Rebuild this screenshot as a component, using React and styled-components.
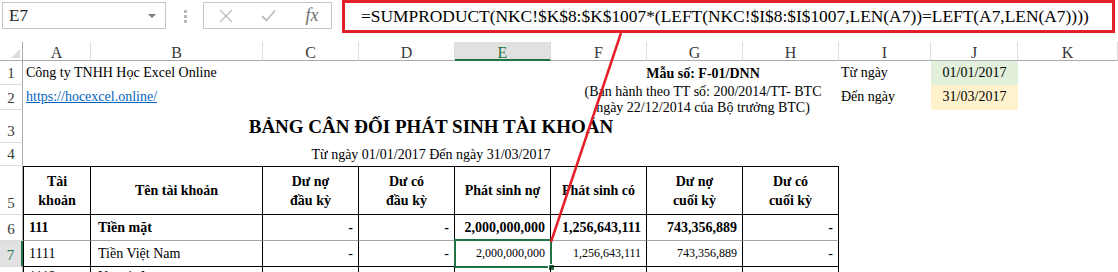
import React from "react";
import styled, { createGlobalStyle, css } from "styled-components";

const GlobalStyle = createGlobalStyle`
  html, body {
    margin: 0;
    padding: 0;
    background: #fff;
  }
  body {
    font-family: "Liberation Serif", "Times New Roman", serif;
    color: #000;
  }
`;

const Page = styled.div`
  position: relative;
  width: 1118px;
  height: 272px;
  overflow: hidden;
  background: #fff;
`;

/* ---------- formula bar ---------- */

const TopBar = styled.div`
  display: flex;
  align-items: flex-start;
  height: 33px;
  padding-left: 2px;
`;

const NameBox = styled.div`
  margin-top: 2px;
  width: 164px;
  height: 27px;
  box-sizing: border-box;
  border: 1px solid #c6c6c6;
  display: flex;
  align-items: center;
  justify-content: space-between;
  padding: 0 9px 0 6px;
  font-size: 17px;
  color: #222;
`;

const Caret = styled.span`
  width: 0;
  height: 0;
  border-left: 4px solid transparent;
  border-right: 4px solid transparent;
  border-top: 4px solid #7a7a7a;
`;

const Grip = styled.div`
  margin: 10px 0 0 18px;
  display: flex;
  flex-direction: column;
  gap: 2px;

  span {
    width: 3px;
    height: 3px;
    background: #b8b8b8;
  }
`;

const ButtonGroup = styled.div`
  margin: 2px 0 0 16px;
  width: 129px;
  height: 27px;
  box-sizing: border-box;
  border: 1px solid #c6c6c6;
  display: flex;
  align-items: center;
  padding-left: 1px;
`;

const BarButton = styled.div`
  width: 44px;
  height: 25px;
  display: flex;
  align-items: center;
  justify-content: center;
  color: #bdbdbd;
`;

const Fx = styled.span`
  font-style: italic;
  font-size: 18px;
  color: #6d6d6d;
  margin-left: 4px;
`;

const FormulaBox = styled.div`
  margin-left: 10px;
  width: 773px;
  height: 33px;
  box-sizing: border-box;
  border: 3px solid #e3202a;
  display: flex;
  align-items: center;
  padding-left: 16px;
  font-size: 17.4px;
  white-space: nowrap;
  overflow: hidden;
`;

/* ---------- sheet ---------- */

const Sheet = styled.div`
  margin-top: 9px;
  display: grid;
  grid-template-columns: 23px 68px 172px 96px 96px 96px 96px 96px 96px 92px 87px 1fr;
  grid-template-rows: 19px 24px 25px 33px 23px 49px 26px 26px 26px;
`;

const Corner = styled.div`
  grid-row: 1;
  grid-column: 1;
  position: relative;
  border-right: 1px solid #ababab;
  border-bottom: 1px solid #ababab;
  box-sizing: border-box;

  &::after {
    content: "";
    position: absolute;
    right: 2px;
    bottom: 2px;
    width: 0;
    height: 0;
    border-left: 9px solid transparent;
    border-bottom: 9px solid #dcdcdc;
  }
`;

const ColHeader = styled.div`
  grid-row: 1;
  grid-column: ${(p) => p.$col};
  box-sizing: border-box;
  display: flex;
  align-items: center;
  justify-content: center;
  font-size: 16px;
  color: #3a3a3a;
  border-right: 1px solid #dcdcdc;
  border-bottom: 1px solid #ababab;
  padding-top: 3px;

  ${(p) =>
    p.$active &&
    css`
      background: #e1e1e1;
      color: #217346;
      border-bottom: 2px solid #217346;
      padding-top: 4px;
    `}
`;

const RowHeader = styled.div`
  grid-column: 1;
  grid-row: ${(p) => p.$row};
  box-sizing: border-box;
  display: flex;
  align-items: flex-end;
  justify-content: center;
  padding-bottom: 2px;
  font-size: 15px;
  color: #3a3a3a;
  border-right: 1px solid #ababab;
  border-bottom: 1px solid #dcdcdc;

  ${(p) =>
    p.$active &&
    css`
      background: #e1e1e1;
      color: #217346;
      border-right: 2px solid #217346;
    `}
`;

const Cell = styled.div`
  grid-row: ${(p) => p.$row};
  grid-column: ${(p) => p.$col};
  box-sizing: border-box;
  display: flex;
  align-items: ${(p) => p.$valign || "flex-end"};
  justify-content: ${(p) =>
    p.$align === "right" ? "flex-end" : p.$align === "center" ? "center" : "flex-start"};
  padding: 0 ${(p) => p.$padR ?? 4}px ${(p) => p.$padB ?? 4}px ${(p) => p.$padL ?? 3}px;
  font-size: ${(p) => p.$size || 14}px;
  line-height: 17px;
  font-weight: ${(p) => (p.$bold ? 700 : 400)};
  white-space: nowrap;
  background: ${(p) => p.$bg || "transparent"};
  position: relative;
`;

const Link = styled.span`
  color: #0563c1;
  text-decoration: underline;
`;

const FormNote = styled.div`
  grid-row: 2 / 4;
  grid-column: 7 / 10;
  padding-left: 16px;
  display: flex;
  flex-direction: column;
  align-items: center;
  font-size: 14px;
  white-space: nowrap;
`;

const FormNoteTitle = styled.div`
  height: 23px;
  line-height: 26px;
  font-weight: 700;
`;

const FormNoteLine = styled.div`
  line-height: 16px;
`;

const Title = styled.div`
  grid-row: ${(p) => p.$row};
  grid-column: 2 / 10;
  display: flex;
  align-items: center;
  justify-content: center;
  font-size: ${(p) => p.$size}px;
  font-weight: ${(p) => (p.$bold ? 700 : 400)};
  padding-top: ${(p) => p.$padT || 0}px;
  white-space: nowrap;
`;

const TableCell = styled.div`
  grid-row: ${(p) => p.$row};
  grid-column: ${(p) => p.$col};
  box-sizing: border-box;
  display: flex;
  align-items: ${(p) => (p.$top ? "flex-start" : "center")};
  justify-content: ${(p) =>
    p.$align === "right" ? "flex-end" : p.$align === "center" ? "center" : "flex-start"};
  text-align: ${(p) => p.$align || "left"};
  padding: ${(p) => (p.$top ? "1px" : "0")} 5px 0 ${(p) => p.$padL ?? 5}px;
  font-size: ${(p) => p.$size || 14}px;
  line-height: ${(p) => (p.$head ? 19 : 17)}px;
  font-weight: ${(p) => (p.$bold ? 700 : 400)};
  white-space: ${(p) => (p.$head ? "pre-line" : "nowrap")};
  border-right: 1px solid #000;
  border-bottom: 1px solid ${(p) => p.$bottom || "#000"};
  ${(p) => p.$first && "border-left: 1px solid #000;"}
  ${(p) => p.$head && "border-top: 1px solid #000;"}
  position: relative;
`;

const Selection = styled.div`
  position: absolute;
  left: -1px;
  top: -2px;
  right: -2px;
  bottom: -2px;
  border: 2px solid #217346;
  pointer-events: none;

  &::after {
    content: "";
    position: absolute;
    right: -5px;
    bottom: -5px;
    width: 5px;
    height: 5px;
    background: #217346;
    border: 1px solid #fff;
  }
`;

const Arrow = styled.svg`
  position: absolute;
  left: 0;
  top: 0;
  pointer-events: none;
`;

const columns = ["A", "B", "C", "D", "E", "F", "G", "H", "I", "J", "K"];

const headers = [
  "Tài\nkhoản",
  "Tên tài khoản",
  "Dư nợ\nđầu kỳ",
  "Dư có\nđầu kỳ",
  "Phát sinh nợ",
  "Phát sinh có",
  "Dư nợ\ncuối kỳ",
  "Dư có\ncuối kỳ",
];

const bodyRows = [
  {
    row: 7,
    bold: true,
    bottom: "#a6a6a6",
    cells: ["111", "Tiền mặt", "-", "-", "2,000,000,000", "1,256,643,111", "743,356,889", "-"],
  },
  {
    row: 8,
    bottom: "#000",
    small: true,
    cells: ["1111", "Tiền Việt Nam", "-", "-", "2,000,000,000", "1,256,643,111", "743,356,889", "-"],
  },
  {
    row: 9,
    top: true,
    cells: ["1112", "Ngoại tệ", "", "", "", "", "", ""],
  },
];

function XIcon() {
  return (
    <svg width="14" height="14" viewBox="0 0 14 14">
      <path d="M1 1 L13 13 M13 1 L1 13" stroke="currentColor" strokeWidth="1.4" fill="none" />
    </svg>
  );
}

function CheckIcon() {
  return (
    <svg width="15" height="13" viewBox="0 0 15 13">
      <path d="M1 7 L5.5 11.5 L14 1.5" stroke="currentColor" strokeWidth="1.8" fill="none" />
    </svg>
  );
}

export default function App() {
  return (
    <Page>
      <GlobalStyle />
      <TopBar>
        <NameBox>
          E7
          <Caret />
        </NameBox>
        <Grip>
          <span />
          <span />
          <span />
        </Grip>
        <ButtonGroup>
          <BarButton>
            <XIcon />
          </BarButton>
          <BarButton>
            <CheckIcon />
          </BarButton>
          <BarButton>
            <Fx>fx</Fx>
          </BarButton>
        </ButtonGroup>
        <FormulaBox>
          =SUMPRODUCT(NKC!$K$8:$K$1007*(LEFT(NKC!$I$8:$I$1007,LEN(A7))=LEFT(A7,LEN(A7))))
        </FormulaBox>
      </TopBar>

      <Sheet>
        <Corner />
        {columns.map((c, i) => (
          <ColHeader key={c} $col={i + 2} $active={c === "E"}>
            {c}
          </ColHeader>
        ))}
        {[1, 2, 3, 4, 5, 6, 7, 8].map((n) => (
          <RowHeader key={n} $row={n + 1} $active={n === 7}>
            {n}
          </RowHeader>
        ))}

        <Cell $row={2} $col="2 / 4">Công ty TNHH Học Excel Online</Cell>
        <Cell $row={3} $col="2 / 4" $padB={5}>
          <Link>https://hocexcel.online/</Link>
        </Cell>

        <FormNote>
          <FormNoteTitle>Mẫu số: F-01/DNN</FormNoteTitle>
          <FormNoteLine>(Ban hành theo TT số: 200/2014/TT- BTC</FormNoteLine>
          <FormNoteLine>ngày 22/12/2014 của Bộ trưởng BTC)</FormNoteLine>
        </FormNote>

        <Cell $row={2} $col={10} $padL={2}>Từ ngày</Cell>
        <Cell $row={2} $col={11} $align="center" $bg="#e2efda" $padL={0} $padR={0}>
          01/01/2017
        </Cell>
        <Cell $row={3} $col={10} $padL={2} $padB={5}>Đến ngày</Cell>
        <Cell $row={3} $col={11} $align="center" $bg="#fff2cc" $padL={0} $padR={0} $padB={5}>
          31/03/2017
        </Cell>

        <Title $row={4} $size={19} $bold $padT={1}>
          BẢNG CÂN ĐỐI PHÁT SINH TÀI KHOẢN
        </Title>
        <Title $row={5} $size={14}>
          Từ ngày 01/01/2017 Đến ngày 31/03/2017
        </Title>

        {headers.map((h, i) => (
          <TableCell key={h} $row={6} $col={i + 2} $head $bold $align="center" $padL={5} $first={i === 0}>
            {h}
          </TableCell>
        ))}

        {bodyRows.map((r) =>
          r.cells.map((v, i) => {
            const numeric = i >= 2;
            return (
              <TableCell
                key={`${r.row}-${i}`}
                $row={r.row}
                $col={i + 2}
                $first={i === 0}
                $bold={r.bold}
                $top={r.top}
                $bottom={r.bottom}
                $align={numeric ? "right" : "left"}
                $padL={i === 1 ? 7 : 5}
                $size={r.small && i >= 4 && i <= 6 ? 12 : 14}
              >
                {v}
                {r.row === 8 && i === 4 && <Selection />}
              </TableCell>
            );
          })
        )}
      </Sheet>

      <Arrow width="1118" height="272" viewBox="0 0 1118 272">
        <line x1="621" y1="33" x2="551" y2="242" stroke="#e3202a" strokeWidth="2.5" />
      </Arrow>
    </Page>
  );
}
